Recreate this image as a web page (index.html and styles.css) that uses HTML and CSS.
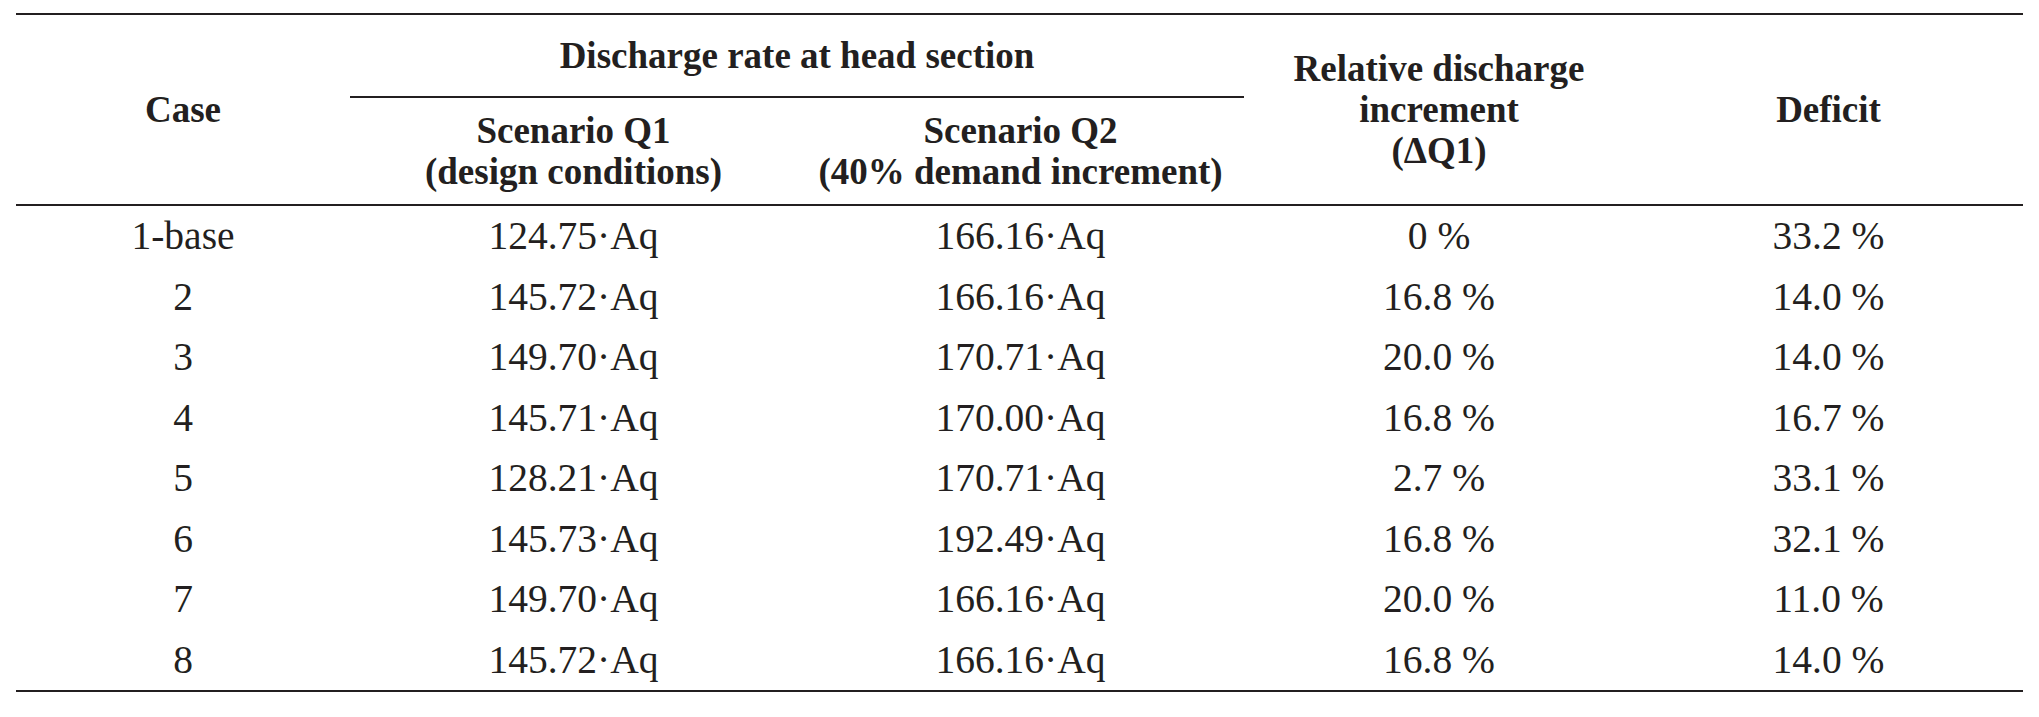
FILE: index.html
```html
<!DOCTYPE html>
<html lang="en">
<head>
<meta charset="utf-8">
<title>Discharge rate at head section</title>
<link rel="stylesheet" href="styles.css">
</head>
<body>
<table class="data-table">
  <colgroup>
    <col class="c-case">
    <col class="c-q">
    <col class="c-q">
    <col class="c-rel">
    <col class="c-def">
  </colgroup>
  <thead>
    <tr class="head-top">
      <th rowspan="2" class="span-cell">Case</th>
      <th colspan="2" class="group-cell">Discharge rate at head section</th>
      <th rowspan="2" class="span-cell">Relative discharge<br>increment<br>(ΔQ1)</th>
      <th rowspan="2" class="span-cell">Deficit</th>
    </tr>
    <tr class="head-sub">
      <th class="sub-cell">Scenario Q1<br>(design conditions)</th>
      <th class="sub-cell">Scenario Q2<br>(40% demand increment)</th>
    </tr>
  </thead>
  <tbody>
    <tr><td>1-base</td><td>124.75·Aq</td><td>166.16·Aq</td><td>0 %</td><td>33.2 %</td></tr>
    <tr><td>2</td><td>145.72·Aq</td><td>166.16·Aq</td><td>16.8 %</td><td>14.0 %</td></tr>
    <tr><td>3</td><td>149.70·Aq</td><td>170.71·Aq</td><td>20.0 %</td><td>14.0 %</td></tr>
    <tr><td>4</td><td>145.71·Aq</td><td>170.00·Aq</td><td>16.8 %</td><td>16.7 %</td></tr>
    <tr><td>5</td><td>128.21·Aq</td><td>170.71·Aq</td><td>2.7 %</td><td>33.1 %</td></tr>
    <tr><td>6</td><td>145.73·Aq</td><td>192.49·Aq</td><td>16.8 %</td><td>32.1 %</td></tr>
    <tr><td>7</td><td>149.70·Aq</td><td>166.16·Aq</td><td>20.0 %</td><td>11.0 %</td></tr>
    <tr><td>8</td><td>145.72·Aq</td><td>166.16·Aq</td><td>16.8 %</td><td>14.0 %</td></tr>
  </tbody>
</table>
</body>
</html>
```

FILE: styles.css
```css
html, body {
  margin: 0;
  padding: 0;
  background: #ffffff;
}

body {
  padding: 13px 16px 0 16px;
  color: #231f20;
  font-family: "Liberation Serif", "Times New Roman", serif;
}

.data-table {
  width: 2007px;
  table-layout: fixed;
  border-collapse: separate;
  border-spacing: 0;
  border-top: 2px solid #231f20;
  border-bottom: 2px solid #231f20;
}

.c-case { width: 334px; }
.c-q { width: 447px; }
.c-rel { width: 390px; }
.c-def { width: 389px; }

.data-table th {
  padding: 0;
  font-size: 37px;
  font-weight: bold;
  line-height: 41px;
  text-align: center;
  vertical-align: middle;
  white-space: nowrap;
}

.group-cell {
  height: 81px;
  border-bottom: 2px solid #231f20;
}

.sub-cell {
  height: 106px;
  border-bottom: 2px solid #231f20;
}

.span-cell {
  border-bottom: 2px solid #231f20;
}

.data-table td {
  padding: 0;
  height: 60.5px;
  font-size: 39.5px;
  line-height: normal;
  text-align: center;
  vertical-align: middle;
  white-space: nowrap;
}
```
